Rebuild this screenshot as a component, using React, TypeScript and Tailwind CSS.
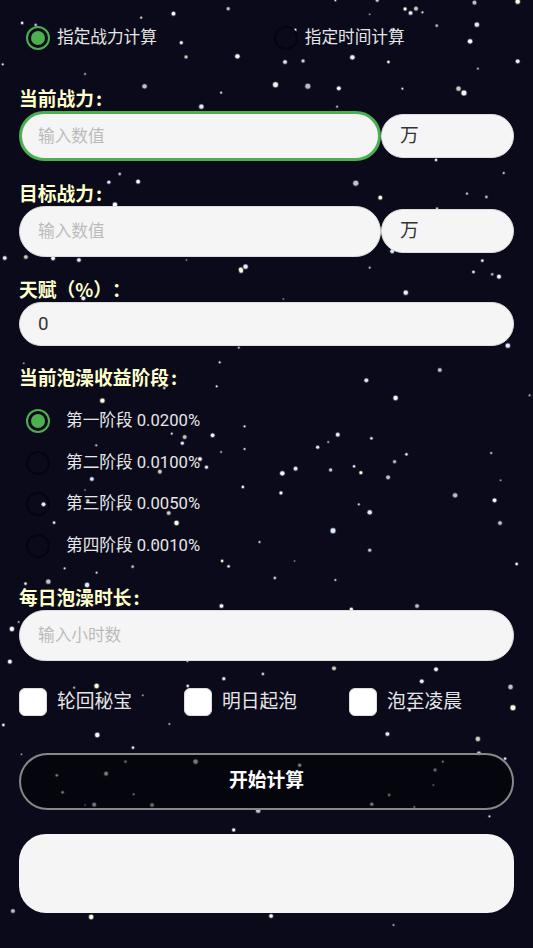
import React from 'react';

const font = "font-['Roboto','Noto_Sans_CJK_SC',sans-serif]";

// star positions read off the 3x crops: [x, y, r]
const top: number[][] = [
  [510,41,5],[671,26,4],[415,53,2],[65,69,3],[105,75,3],[228,86,3],[533,128,4],[547,171,4],[698,169,6],[838,186,5],[891,183,4],[1036,172,6],
  [1142,186,3],[1284,77,3],[1402,74,6],[1382,124,6],[1395,8,5],[1522,5,6],[1522,184,5],[1405,206,2],[1191,27,4],[1207,39,5],[1223,26,5],[1242,37,2],
  [1087,43,1],[1109,1,4],[986,1,2],[8,193,2],[250,222,2],[868,90,3],[1157,88,3],[425,259,6],[650,278,2],[810,254,7],[905,259,7],[996,265,5],
  [1183,266,2],[1348,266,6],[1364,279,7],[592,320,6],[991,320,2],[1282,480,3],[1481,519,2],[352,522,3],[320,547,4],[406,545,5],[1046,550,7],
  [1118,593,5],[1373,581,2],[1430,591,3],[338,614,6],[14,774,5],[76,771,5],[156,775,5],[232,780,5],[548,780,1],[722,800,6],[708,808,5],[1087,803,2],
  [1153,754,5],[1418,782,3],[1285,626,3],
];
const middle: number[][] = [
  [709,3,5],[1392,6,3],[1447,13,3],[1467,20,5],[1193,68,6],[833,87,1],[245,85,5],[1493,227,6],[702,233,2],[70,280,1],[646,277,2],[1293,300,5],
  [1077,331,5],[637,349,2],[483,354,3],[301,392,6],[1163,384,6],[1557,376,2],[719,469,2],[505,491,2],[543,501,5],[625,496,5],[536,520,4],[283,526,2],
  [993,494,5],[1092,505,3],[965,516,2],[934,532,4],[719,537,2],[650,546,2],[1195,553,3],[1444,549,2],[1160,575,4],[588,567,5],[607,592,4],[470,605,5],
  [830,610,6],[869,596,5],[972,600,4],[1041,589,3],[1061,608,4],[1141,622,5],[270,627,5],[714,651,3],[250,660,1],[1472,631,1],[826,669,4],[1338,676,6],
  [1454,691,5],[128,703,5],[258,692,4],[1055,703,2],[1087,727,6],[496,729,5],[159,758,3],[519,759,6],[1470,759,5],[979,782,7],[763,816,2],[1087,841,4],
  [653,873,3],[672,889,3],[866,873,1],[1519,882,3],[190,895,2],[390,890,3],[455,820,2],
];
const bottom: number[][] = [
  [284,8,2],[808,24,3],[986,30,2],[75,41,3],[142,35,6],[256,45,6],[651,108,5],[1226,108,5],[1033,118,4],[35,177,6],[55,156,2],[29,275,5],[551,273,2],
  [982,295,5],[1282,298,5],[658,326,4],[773,312,3],[1240,334,5],[284,348,6],[218,353,2],[552,348,3],[420,376,1],[1501,351,6],[1508,413,7],[10,465,3],
  [498,462,2],[286,495,6],[1139,492,5],[1405,507,6],[391,533,3],[63,553,1],[369,575,3],[575,575,6],[881,586,4],[1408,550,5],[1485,566,3],[1302,575,2],
  [1279,600,4],[167,616,3],[312,611,5],[1274,645,2],[184,667,3],[393,673,2],[1144,675,3],[250,705,1],[277,704,5],[447,705,5],[1093,703,4],[1218,711,2],
  [759,722,6],[1439,739,2],[687,780,4],[38,1023,5],[268,1041,6],[797,1038,5],[1157,1065,2],[1204,420,3],
];

const tints = ['#ffffff', '#e8f0ff', '#fffbe0', '#f4f4f4', '#dfe8ff'];

function Stars() {
  const stars = [
    ...top.map(([x, y, r]) => [x, y, r]),
    ...middle.map(([x, y, r]) => [x, y + 810, r]),
    ...bottom.map(([x, y, r]) => [x, y + 1710, r]),
  ];
  return (
    <svg className="absolute inset-0 w-full h-full" viewBox="0 0 533 948">
      {stars.map(([x, y, r], i) => (
        <g key={i} fill={tints[i % tints.length]} opacity={i % 3 === 1 ? 0.8 : 1}>
          <circle cx={x / 2.94} cy={y / 3} r={r / 3 + 0.9} opacity={0.3} />
          <circle cx={x / 2.94} cy={y / 3} r={r / 3 + 0.15} />
        </g>
      ))}
    </svg>
  );
}

function Radio({ checked, label, gap }: { checked?: boolean; label: string; gap: string }) {
  return (
    <div className={`flex items-center ${gap}`}>
      <div
        className={`w-6 h-6 rounded-full border-2 flex items-center justify-center ${
          checked ? 'border-[#4caf50]' : 'border-[#050510]'
        }`}
      >
        {checked && <div className="w-3.5 h-3.5 rounded-full bg-[#4caf50]" />}
      </div>
      <span className="text-[16.67px] leading-6 text-[#e6e6e6]">{label}</span>
    </div>
  );
}

function Label({ children, colon = true, className }: { children: React.ReactNode; colon?: boolean; className: string }) {
  return (
    <div className={`text-[18.75px] leading-6 font-bold text-[#ffffcc] font-['Noto_Sans_CJK_SC',sans-serif] [text-spacing-trim:space-all] ${className}`}>
      {children}
      {colon && <span className="ml-[2px]">:</span>}
    </div>
  );
}

function Unit() {
  return (
    <div className="w-[133px] h-11 mt-[3px] shrink-0 rounded-full bg-[#f5f5f5] border border-[#dddddd] flex items-center pl-[18px] text-[18.75px] text-[#333333]">
      万
    </div>
  );
}

function Check({ label }: { label: string }) {
  return (
    <div className="flex-1 flex items-center gap-2.5">
      <div className="w-7 h-7 rounded-md bg-white border border-[#dddddd]" />
      <span className="text-[18.75px] leading-6 text-[#e6e6e6]">{label}</span>
    </div>
  );
}

export default function App() {
  return (
    <div className={`relative w-[533px] h-[948px] overflow-hidden bg-[#0a0a1a] ${font}`}>
      <Stars />
      <div className="relative flex flex-col px-[19px] pt-[26px]">
        <div className="flex">
          <div className="flex-1 pl-[7px]">
            <Radio checked label="指定战力计算" gap="gap-[7px]" />
          </div>
          <div className="flex-1 pl-[7.5px]">
            <Radio label="指定时间计算" gap="gap-[7px]" />
          </div>
        </div>

        <Label className="mt-9">当前战力</Label>
        <div className="flex items-start mt-px">
          <div className="flex-1 h-[50px] rounded-full bg-[#f5f5f5] border-[3px] border-[#4caf50] flex items-center pl-4 text-[16.67px] text-[#bbbbbb]">
            输入数值
          </div>
          <Unit />
        </div>

        <Label className="mt-5">目标战力</Label>
        <div className="flex items-start mt-px">
          <div className="flex-1 h-[51px] rounded-full bg-[#f5f5f5] border border-[#dddddd] flex items-center pl-[18px] text-[16.67px] text-[#bbbbbb]">
            输入数值
          </div>
          <Unit />
        </div>

        <Label colon={false} className="mt-5">天赋（%）：</Label>
        <div className="h-11 mt-px rounded-full bg-[#f5f5f5] border border-[#dddddd] flex items-center pl-[18px] pt-px text-[18.75px] text-[#333333]">
          0
        </div>

        <Label className="mt-[19px]">当前泡澡收益阶段</Label>
        <div className="flex flex-col gap-[17.5px] mt-5 pl-[7px]">
          <Radio checked label="第一阶段 0.0200%" gap="gap-4" />
          <Radio label="第二阶段 0.0100%" gap="gap-4" />
          <Radio label="第三阶段 0.0050%" gap="gap-4" />
          <Radio label="第四阶段 0.0010%" gap="gap-4" />
        </div>

        <Label className="mt-[27px]">每日泡澡时长</Label>
        <div className="h-[51px] mt-px rounded-full bg-[#f5f5f5] border border-[#dddddd] flex items-center pl-[18px] text-[16.67px] text-[#bbbbbb]">
          输入小时数
        </div>

        <div className="flex mt-[27px]">
          <Check label="轮回秘宝" />
          <Check label="明日起泡" />
          <Check label="泡至凌晨" />
        </div>

        <div className="h-[57px] mt-[37px] rounded-full bg-black/50 border-2 border-[#888888] flex items-center justify-center text-[18.75px] font-bold text-white">
          开始计算
        </div>

        <div className="h-[79px] mt-6 rounded-[27px] bg-[#f5f5f5]" />
      </div>
    </div>
  );
}
